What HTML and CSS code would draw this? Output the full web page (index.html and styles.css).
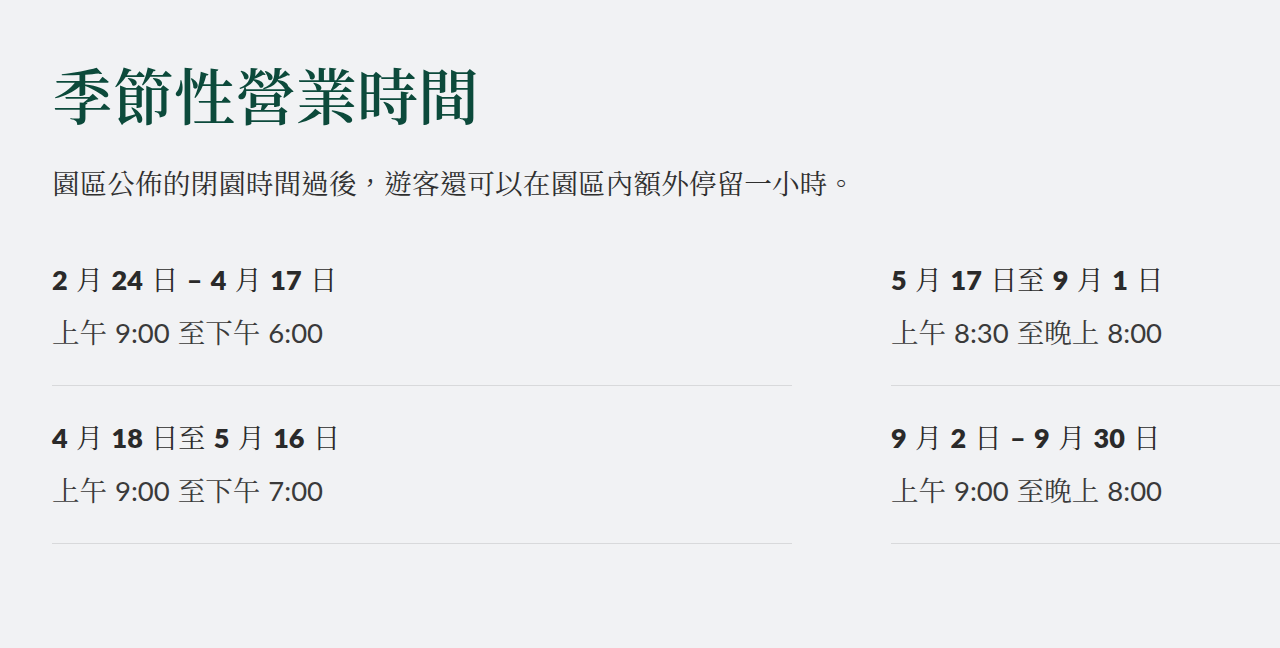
FILE: index.html
```html
<!DOCTYPE html>
<html lang="zh-Hant">
<head>
<meta charset="utf-8">
<title>季節性營業時間</title>
<link rel="stylesheet" href="styles.css">
</head>
<body>
<main class="page">
  <h1 class="title">季節性營業時間</h1>
  <p class="intro">園區公佈的閉園時間過後，遊客還可以在園區內額外停留一小時。</p>
  <div class="grid">
    <div class="item">
      <div class="date"><b>2</b> 月 <b>24</b> 日 <b>–</b> <b>4</b> 月 <b>17</b> 日</div>
      <div class="time">上午 9:00 至下午 6:00</div>
    </div>
    <div class="item">
      <div class="date"><b>5</b> 月 <b>17</b> 日至 <b>9</b> 月 <b>1</b> 日</div>
      <div class="time">上午 8:30 至晚上 8:00</div>
    </div>
    <div class="item">
      <div class="date"><b>4</b> 月 <b>18</b> 日至 <b>5</b> 月 <b>16</b> 日</div>
      <div class="time">上午 9:00 至下午 7:00</div>
    </div>
    <div class="item">
      <div class="date"><b>9</b> 月 <b>2</b> 日 <b>–</b> <b>9</b> 月 <b>30</b> 日</div>
      <div class="time">上午 9:00 至晚上 8:00</div>
    </div>
  </div>
</main>
</body>
</html>
```

FILE: styles.css
```css
html, body {
  margin: 0;
  padding: 0;
}
body {
  background: #f1f2f4;
  overflow: hidden;
  font-family: Lato, "Noto Serif CJK TC", "Noto Sans CJK TC", serif;
  color: #2b2b2b;
}
.page {
  padding: 54px 0 0 52px;
  width: 1580px;
}
.title {
  margin: 0;
  font-family: "Noto Serif CJK TC", "Noto Sans CJK TC", serif;
  font-weight: 600;
  font-size: 61px;
  line-height: 80px;
  color: #0c4a3b;
}
.intro {
  margin: 28px 0 0;
  font-family: "Noto Serif CJK TC", "Noto Sans CJK TC", serif;
  font-size: 27.7px;
  line-height: 40px;
  color: #2f2f2f;
}
.grid {
  display: grid;
  grid-template-columns: 740px 740px;
  column-gap: 99px;
  margin-top: 50px;
}
.item {
  border-bottom: 1px solid #d8d9db;
  padding: 10px 0 34px;
}
.item:nth-child(n+3) {
  padding-top: 34px;
}
.date {
  font-size: 27px;
  line-height: 36px;
  color: #2a2a2a;
  word-spacing: 1.5px;
}
.date b {
  font-weight: 800;
}
.time {
  margin-top: 17px;
  font-size: 27.5px;
  line-height: 36px;
  color: #3a3a3a;
  word-spacing: 1px;
}
```
